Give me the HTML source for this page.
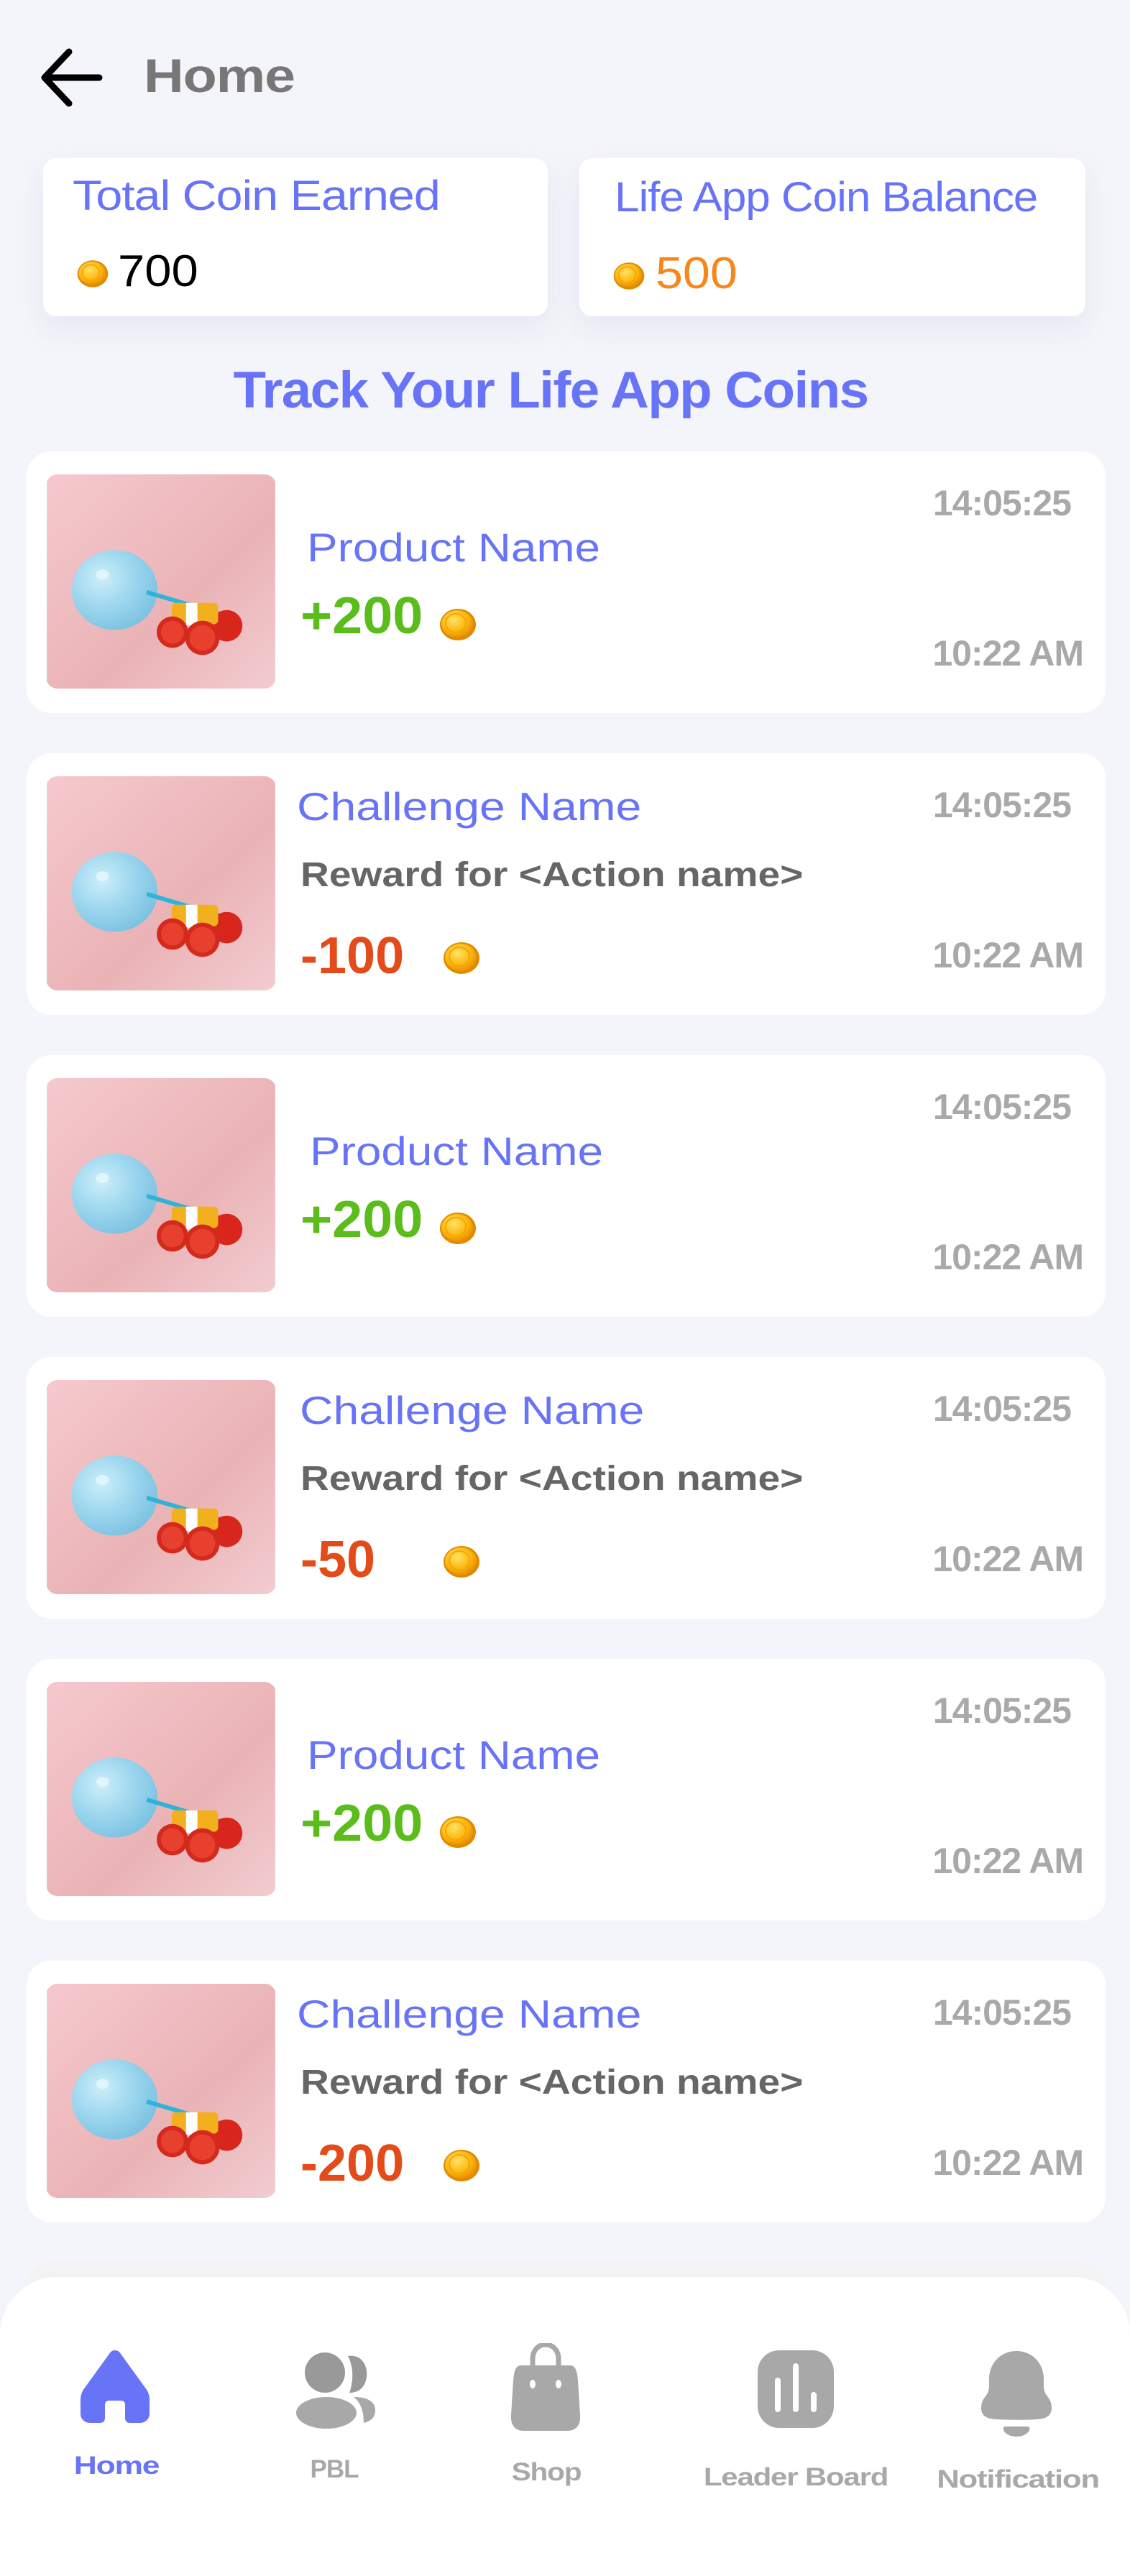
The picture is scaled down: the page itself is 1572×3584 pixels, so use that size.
<!DOCTYPE html>
<html><head><meta charset="utf-8">
<style>
*{margin:0;padding:0;box-sizing:border-box}
body{width:1572px;height:3584px;background:#f4f5fa;font-family:"Liberation Sans",Arial,sans-serif;position:relative;overflow:hidden}
.a{position:absolute;line-height:1;white-space:nowrap}
.sx{transform-origin:0 50%}
.sum{position:absolute;top:220px;height:220px;background:#fff;border-radius:18px;box-shadow:0 18px 40px rgba(200,205,230,.35)}
.card{position:absolute;left:37px;width:1501px;height:364px;background:#fff;border-radius:34px}
.img{position:absolute;left:27px;top:32px;width:320px;height:298px;border-radius:16px;overflow:hidden}
.blue{color:#6874f7}
.pn{transform:scaleX(1.14);transform-origin:0 50%}
.cn{transform:scaleX(1.17);transform-origin:0 50%}
.rw{transform:scaleX(1.15);transform-origin:0 50%}
.t{font-weight:bold;color:#a9a9a9;font-size:50px;letter-spacing:-1px}
.coin{position:absolute;width:54px;height:46px}
.lbl{position:absolute;font-weight:bold;font-size:35px;line-height:1;color:#a8a8a8;letter-spacing:-1px}
</style></head><body>
<svg width="0" height="0" style="position:absolute">
<defs>
<linearGradient id="pk" x1="0" y1="0" x2="1" y2="1"><stop offset="0" stop-color="#f5c9ce"/><stop offset=".6" stop-color="#eab3b6"/><stop offset="1" stop-color="#f2ccd0"/></linearGradient>
<radialGradient id="bl" cx=".35" cy=".35" r=".7"><stop offset="0" stop-color="#cdeefa"/><stop offset=".5" stop-color="#9fd8ef"/><stop offset="1" stop-color="#7cc2e2"/></radialGradient>
<radialGradient id="cg" cx=".4" cy=".35" r=".7"><stop offset="0" stop-color="#ffe266"/><stop offset=".6" stop-color="#fbb810"/><stop offset="1" stop-color="#e58a00"/></radialGradient>
<symbol id="pic" viewBox="0 0 320 300">
<rect width="320" height="300" fill="url(#pk)"/>
<ellipse cx="95" cy="162" rx="60" ry="56" fill="url(#bl)"/>
<ellipse cx="78" cy="140" rx="9" ry="7" fill="#e6f7fd" opacity=".8"/>
<line x1="140" y1="165" x2="258" y2="200" stroke="#2fb3d6" stroke-width="6"/>
<circle cx="252" cy="212" r="22" fill="#d9261c"/>
<rect x="175" y="180" width="65" height="30" rx="6" fill="#f2b01e"/>
<rect x="195" y="180" width="16" height="32" fill="#fff"/>
<circle cx="176" cy="221" r="22" fill="#d42a1e"/><circle cx="176" cy="221" r="16" fill="#e8402e"/>
<circle cx="218" cy="229" r="24" fill="#d42a1e"/><circle cx="218" cy="229" r="18" fill="#e8402e"/>
</symbol>
<symbol id="cn" viewBox="0 0 54 46"><ellipse cx="27" cy="23" rx="25" ry="22" fill="#e08a00"/><ellipse cx="26" cy="22" rx="22" ry="19" fill="url(#cg)"/><ellipse cx="24" cy="21" rx="14" ry="13" fill="none" stroke="#f9a400" stroke-width="2"/></symbol>
</defs></svg>

<svg class="a" style="left:52px;top:60px" width="96" height="96" viewBox="0 0 96 96"><path d="M86 48H12M44 12L10 48L44 84" fill="none" stroke="#000" stroke-width="9" stroke-linecap="round" stroke-linejoin="round"/></svg>
<div class="a" style="left:200px;top:72px;font-size:66px;font-weight:bold;color:#777;letter-spacing:-1px;transform:scaleX(1.17);transform-origin:0 50%">Home</div>

<div class="sum" style="left:60px;width:702px"></div>
<div class="sum" style="left:806px;width:704px"></div>
<div class="a blue" style="left:101px;top:244px;font-size:58px;letter-spacing:-1px;transform:scaleX(1.15);transform-origin:0 50%">Total Coin Earned</div>
<svg class="a" style="left:106px;top:360px" width="46" height="42"><use href="#cn" width="46" height="42"/></svg>
<div class="a" style="left:164px;top:347px;font-size:62px;color:#000;transform:scaleX(1.08);transform-origin:0 50%">700</div>
<div class="a blue" style="left:855px;top:246px;font-size:58px;letter-spacing:-1px;transform:scaleX(1.07);transform-origin:0 50%">Life App Coin Balance</div>
<svg class="a" style="left:852px;top:363px" width="46" height="42"><use href="#cn" width="46" height="42"/></svg>
<div class="a" style="left:912px;top:350px;font-size:62px;color:#f7861b;transform:scaleX(1.1);transform-origin:0 50%">500</div>

<div class="a blue" style="left:0;width:1572px;text-align:center;top:508px;font-size:71px;font-weight:bold;letter-spacing:-1.5px;transform:translateX(-20px) scaleX(1.05)">Track Your Life App Coins</div>

<div class="card" style="top:628px">
<svg class="img"><use href="#pic" width="320" height="298"/></svg>
<div class="a blue pn" style="left:390px;top:106px;font-size:56px">Product Name</div>
<div class="a" style="left:381px;top:193px;font-size:72px;font-weight:bold;color:#5bbd1c;transform:scaleX(1.05);transform-origin:0 50%">+200</div>
<svg class="coin" style="left:573px;top:218px"><use href="#cn" width="54" height="46"/></svg>
<div class="a t" style="right:48px;top:47px">14:05:25</div>
<div class="a t" style="right:31px;top:256px">10:22 AM</div>
</div>
<div class="card" style="top:1048px">
<svg class="img"><use href="#pic" width="320" height="298"/></svg>
<div class="a blue cn" style="left:376px;top:47px;font-size:55px">Challenge Name</div>
<div class="a rw" style="left:381px;top:146px;font-size:48px;font-weight:bold;color:#666">Reward for &lt;Action name&gt;</div>
<div class="a" style="left:381px;top:246px;font-size:72px;font-weight:bold;color:#e34b1a">-100</div>
<svg class="coin" style="left:578px;top:262px"><use href="#cn" width="54" height="46"/></svg>
<div class="a t" style="right:48px;top:47px">14:05:25</div>
<div class="a t" style="right:31px;top:256px">10:22 AM</div>
</div>
<div class="card" style="top:1468px">
<svg class="img"><use href="#pic" width="320" height="298"/></svg>
<div class="a blue pn" style="left:394px;top:106px;font-size:56px">Product Name</div>
<div class="a" style="left:381px;top:193px;font-size:72px;font-weight:bold;color:#5bbd1c;transform:scaleX(1.05);transform-origin:0 50%">+200</div>
<svg class="coin" style="left:573px;top:218px"><use href="#cn" width="54" height="46"/></svg>
<div class="a t" style="right:48px;top:47px">14:05:25</div>
<div class="a t" style="right:31px;top:256px">10:22 AM</div>
</div>
<div class="card" style="top:1888px">
<svg class="img"><use href="#pic" width="320" height="298"/></svg>
<div class="a blue cn" style="left:380px;top:47px;font-size:55px">Challenge Name</div>
<div class="a rw" style="left:381px;top:146px;font-size:48px;font-weight:bold;color:#666">Reward for &lt;Action name&gt;</div>
<div class="a" style="left:381px;top:246px;font-size:72px;font-weight:bold;color:#e34b1a">-50</div>
<svg class="coin" style="left:578px;top:262px"><use href="#cn" width="54" height="46"/></svg>
<div class="a t" style="right:48px;top:47px">14:05:25</div>
<div class="a t" style="right:31px;top:256px">10:22 AM</div>
</div>
<div class="card" style="top:2308px">
<svg class="img"><use href="#pic" width="320" height="298"/></svg>
<div class="a blue pn" style="left:390px;top:106px;font-size:56px">Product Name</div>
<div class="a" style="left:381px;top:193px;font-size:72px;font-weight:bold;color:#5bbd1c;transform:scaleX(1.05);transform-origin:0 50%">+200</div>
<svg class="coin" style="left:573px;top:218px"><use href="#cn" width="54" height="46"/></svg>
<div class="a t" style="right:48px;top:47px">14:05:25</div>
<div class="a t" style="right:31px;top:256px">10:22 AM</div>
</div>
<div class="card" style="top:2728px">
<svg class="img"><use href="#pic" width="320" height="298"/></svg>
<div class="a blue cn" style="left:376px;top:47px;font-size:55px">Challenge Name</div>
<div class="a rw" style="left:381px;top:146px;font-size:48px;font-weight:bold;color:#666">Reward for &lt;Action name&gt;</div>
<div class="a" style="left:381px;top:246px;font-size:72px;font-weight:bold;color:#e34b1a">-200</div>
<svg class="coin" style="left:578px;top:262px"><use href="#cn" width="54" height="46"/></svg>
<div class="a t" style="right:48px;top:47px">14:05:25</div>
<div class="a t" style="right:31px;top:256px">10:22 AM</div>
</div>
<div class="card" style="top:3148px;background:#f3f3f3">
<div class="a t" style="right:48px;top:14px">14:05:25</div>
</div>

<div style="position:absolute;left:0;top:3168px;width:1572px;height:416px;background:#fff;border-radius:80px 80px 0 0"></div>
<svg class="a" style="left:112px;top:3270px" width="96" height="102" viewBox="0 0 96 102"><path d="M48 0C44 0 42 2 40 5L6 52C2 57 0 62 0 70V88C0 96 6 101 14 101H26C32 101 34 99 34 93V76C34 72 36 70 40 70H56C60 70 62 72 62 76V93C62 99 64 101 70 101H82C90 101 96 96 96 88V70C96 62 94 57 90 52L56 5C54 2 52 0 48 0Z" fill="#6874f7"/></svg>
<svg class="a" style="left:408px;top:3273px" width="120" height="106" viewBox="0 0 120 106"><ellipse cx="44" cy="28" rx="28" ry="28" fill="#999"/><path d="M76 5C96 2 104 20 102 34C100 48 92 56 78 56C84 40 84 20 76 5Z" fill="#999"/><ellipse cx="46" cy="84" rx="42" ry="22" fill="#a8a8a8"/><path d="M84 62C106 62 114 70 114 80C114 92 106 96 98 98C98 82 94 70 84 62Z" fill="#a8a8a8"/></svg>
<svg class="a" style="left:707px;top:3260px" width="104" height="124" viewBox="0 0 104 124"><path d="M34 32V22C34 10 42 2 52 2C62 2 70 10 70 22V32" fill="none" stroke="#a8a8a8" stroke-width="7"/><path d="M18 31H86C94 31 96 40 97 52L100 100C101 115 94 122 82 122H22C10 122 3 115 4 100L7 52C8 40 10 31 18 31Z" fill="#a8a8a8"/><ellipse cx="34" cy="57" rx="4" ry="6" fill="#fff"/><ellipse cx="70" cy="57" rx="4" ry="6" fill="#fff"/></svg>
<svg class="a" style="left:1054px;top:3270px" width="106" height="108" viewBox="0 0 106 108"><rect width="106" height="108" rx="30" fill="#a8a8a8"/><path d="M28 42V82M53 22V82M78 62V82" stroke="#fff" stroke-width="8" stroke-linecap="round"/></svg>
<svg class="a" style="left:1365px;top:3270px" width="98" height="122" viewBox="0 0 98 122"><path d="M49 1C27 1 11 18 11 40V50C11 56 9 60 6 64C2 69 0 74 0 80C0 90 6 95 20 96C38 97 60 97 78 96C92 95 98 90 98 80C98 74 96 69 92 64C89 60 87 56 87 50V40C87 18 71 1 49 1Z" fill="#a8a8a8"/><path d="M34 106H64C68 106 68 110 66 113C62 118 56 120 49 120C42 120 36 118 32 113C30 110 30 106 34 106Z" fill="#a8a8a8"/></svg>
<div class="lbl" style="left:162px;top:3413px;color:#6874f7;transform:translateX(-50%) scaleX(1.27)">Home</div>
<div class="lbl" style="left:465px;top:3418px;transform:translateX(-50%)">PBL</div>
<div class="lbl" style="left:760px;top:3422px;transform:translateX(-50%) scaleX(1.16)">Shop</div>
<div class="lbl" style="left:1107px;top:3429px;transform:translateX(-50%) scaleX(1.2)">Leader Board</div>
<div class="lbl" style="left:1416px;top:3432px;transform:translateX(-50%) scaleX(1.25)">Notification</div>
</body></html>
